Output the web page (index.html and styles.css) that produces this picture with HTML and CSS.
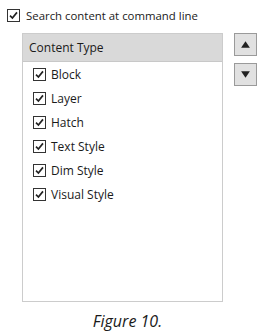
FILE: index.html
```html
<!DOCTYPE html>
<html lang="en">
<head>
    <meta charset="UTF-8">
    <title>Figure 10</title>
    <link rel="stylesheet" href="styles.css">
</head>
<body>
<div class="search-row">
    <span class="box"><svg viewBox="0 0 12 12"><path d="M2.2 6.2 L4.8 8.8 L9.8 2.6" /></svg></span>
    <span>Search content at command line</span>
</div>

<div class="main">
    <div class="panel">
        <div class="panel-head">Content Type</div>
        <div class="list">
            <div class="item"><span class="box"><svg viewBox="0 0 12 12"><path d="M2.2 6.2 L4.8 8.8 L9.8 2.6" /></svg></span>Block</div>
            <div class="item"><span class="box"><svg viewBox="0 0 12 12"><path d="M2.2 6.2 L4.8 8.8 L9.8 2.6" /></svg></span>Layer</div>
            <div class="item"><span class="box"><svg viewBox="0 0 12 12"><path d="M2.2 6.2 L4.8 8.8 L9.8 2.6" /></svg></span>Hatch</div>
            <div class="item"><span class="box"><svg viewBox="0 0 12 12"><path d="M2.2 6.2 L4.8 8.8 L9.8 2.6" /></svg></span>Text Style</div>
            <div class="item"><span class="box"><svg viewBox="0 0 12 12"><path d="M2.2 6.2 L4.8 8.8 L9.8 2.6" /></svg></span>Dim Style</div>
            <div class="item"><span class="box"><svg viewBox="0 0 12 12"><path d="M2.2 6.2 L4.8 8.8 L9.8 2.6" /></svg></span>Visual Style</div>
        </div>
    </div>
    <div class="buttons">
        <div class="btn"><svg viewBox="0 0 10 10"><polygon points="5,2 9,8 1,8" /></svg></div>
        <div class="btn"><svg viewBox="0 0 10 10"><polygon points="1,2 9,2 5,8" /></svg></div>
    </div>
</div>

<div class="caption">Figure 10.</div>
</body>
</html>
```

FILE: styles.css
```css
body {
    margin: 0;
    background: #ffffff;
    font-family: 'Open Sans', 'Noto Sans', sans-serif;
    font-size: 11.4px;
    color: #1a1a1a;
}

.search-row {
    display: flex;
    align-items: center;
    gap: 6px;
    padding: 9px 0 0 7px;
    height: 13px;
}

.box {
    display: inline-block;
    width: 11px;
    height: 11px;
    border: 1px solid #333333;
    background: #ffffff;
    flex: none;
}
.box svg {
    display: block;
    width: 11px;
    height: 11px;
}
.box path {
    fill: none;
    stroke: #222222;
    stroke-width: 1.8;
}

.main {
    display: flex;
    gap: 11px;
    margin: 11px 0 0 22px;
}

.panel {
    width: 199px;
    height: 267px;
    border: 1px solid #cccccc;
}
.panel-head {
    background: #d9d9d9;
    height: 27px;
    line-height: 27px;
    padding-left: 6px;
    border-bottom: 1px solid #c8c8c8;
    font-size: 12px;
}
.list {
    padding-top: 0;
}
.item {
    display: flex;
    align-items: center;
    gap: 5px;
    height: 24px;
    padding-left: 10px;
    font-size: 12px;
}

.buttons {
    display: flex;
    flex-direction: column;
    gap: 7px;
}
.btn {
    width: 21px;
    height: 21px;
    background: #e1e1e1;
    border: 1px solid #9a9a9a;
    display: flex;
    align-items: center;
    justify-content: center;
}
.btn svg {
    width: 11px;
    height: 11px;
}
.btn polygon {
    fill: #222222;
}

.caption {
    text-align: center;
    font-style: italic;
    font-size: 16px;
    margin-top: 8px;
    padding-right: 6px;
}
```
